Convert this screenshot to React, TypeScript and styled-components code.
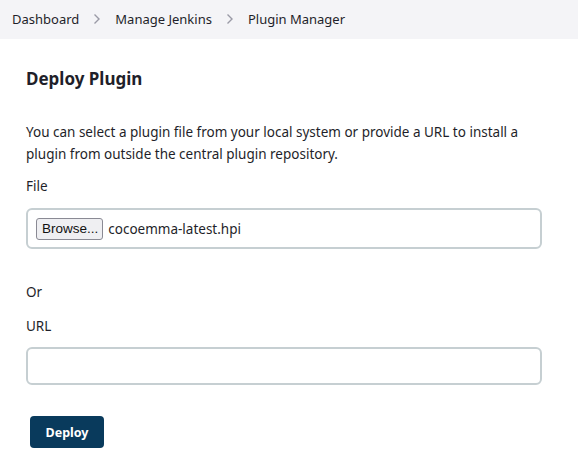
import React from "react";
import styled, { createGlobalStyle } from "styled-components";

const Global = createGlobalStyle`
  html, body { margin: 0; padding: 0; background: #fff; }
  body { font-family: "Noto Sans", "Open Sans", sans-serif; color: #1f1f2a; }
  * { box-sizing: border-box; }
`;

const Page = styled.div`
  width: 578px;
  height: 464px;
  display: flex;
  flex-direction: column;
`;

const Breadcrumbs = styled.nav`
  height: 39px;
  background: #f4f4f7;
  display: flex;
  align-items: center;
  padding: 0 12px 2px;
  gap: 13px;
  font-size: 13px;
  color: #1f1f2a;
`;

const Crumb = styled.span`
  white-space: nowrap;
`;

const Chevron = styled.svg`
  width: 8px;
  height: 12px;
  flex: none;
  margin: 0 1px;
`;

const Main = styled.main`
  padding: 28px 36px 0 26px;
  display: flex;
  flex-direction: column;
`;

const Title = styled.h1`
  margin: 0 0 30px;
  font-size: 17px;
  font-weight: 700;
  line-height: 24px;
  color: #1f1f2a;
`;

const Text = styled.p`
  margin: 0 0 10px;
  font-size: 13.5px;
  line-height: 22px;
`;

const Label = styled.div<{ $gap: number }>`
  font-size: 13.5px;
  line-height: 22px;
  margin-bottom: ${(p) => p.$gap}px;
`;

const Field = styled.div<{ $h: number; $mb: number }>`
  height: ${(p) => p.$h}px;
  border: 2px solid #c6cfd2;
  border-radius: 6px;
  display: flex;
  align-items: center;
  padding: 0 8px;
  gap: 5px;
  margin-bottom: ${(p) => p.$mb}px;
`;

const Browse = styled.span`
  height: 22px;
  padding: 0 4px 0 5px;
  border: 1px solid #8a8a94;
  border-radius: 3px;
  background: #efeff2;
  display: flex;
  align-items: center;
  font-family: "Liberation Sans", Arial, sans-serif;
  font-size: 13.5px;
  color: #111;
`;

const FileName = styled.span`
  font-size: 13.5px;
  color: #1f1f2a;
`;

const DeployButton = styled.button`
  align-self: flex-start;
  margin-left: 4px;
  width: 74px;
  height: 32px;
  border: none;
  border-radius: 4px;
  background: #093a5c;
  color: #fff;
  font-family: "Noto Sans", sans-serif;
  font-weight: 700;
  font-size: 12.5px;
`;

const Sep = () => (
  <Chevron viewBox="0 0 8 12">
    <path d="M1.5 1.5 L6 6 L1.5 10.5" fill="none" stroke="#9a9aa6" strokeWidth="1.4" />
  </Chevron>
);

export default function App() {
  return (
    <Page>
      <Global />
      <Breadcrumbs>
        <Crumb>Dashboard</Crumb>
        <Sep />
        <Crumb>Manage Jenkins</Crumb>
        <Sep />
        <Crumb>Plugin Manager</Crumb>
      </Breadcrumbs>
      <Main>
        <Title>Deploy Plugin</Title>
        <Text>
          You can select a plugin file from your local system or provide a URL to install a
          plugin from outside the central plugin repository.
        </Text>
        <Label $gap={11}>File</Label>
        <Field $h={41} $mb={32}>
          <Browse>Browse...</Browse>
          <FileName>cocoemma-latest.hpi</FileName>
        </Field>
        <Label $gap={12}>Or</Label>
        <Label $gap={10}>URL</Label>
        <Field $h={38} $mb={31} />
        <DeployButton>Deploy</DeployButton>
      </Main>
    </Page>
  );
}
